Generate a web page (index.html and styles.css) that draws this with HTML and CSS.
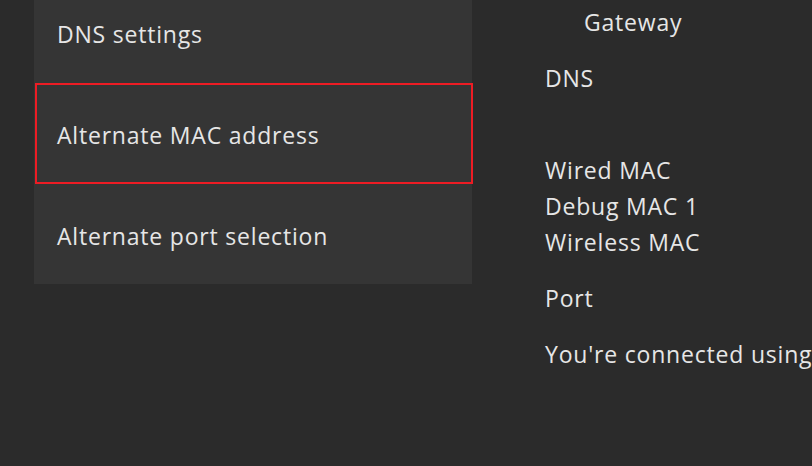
FILE: index.html
```html
<!DOCTYPE html>
<html lang="en">
<head>
  <meta charset="UTF-8" />
  <title>Advanced settings</title>
  <link rel="stylesheet" href="styles.css">
</head>
<body>
  <div class="page">
    <!-- settings menu -->
    <div class="menu">
      <div class="menu-item">DNS settings</div>
      <div class="menu-item focused">Alternate MAC address</div>
      <div class="menu-item">Alternate port selection</div>
    </div>

    <!-- network info -->
    <div class="info">
      <div class="group">
        <div class="line indent">Gateway</div>
      </div>
      <div class="group">
        <div class="line">DNS</div>
        <div class="line"></div>
      </div>
      <div class="group">
        <div class="line">Wired MAC</div>
        <div class="line">Debug MAC 1</div>
        <div class="line">Wireless MAC</div>
      </div>
      <div class="group">
        <div class="line">Port</div>
      </div>
      <div class="group">
        <div class="line">You're connected using</div>
      </div>
    </div>
  </div>
</body>
</html>
```

FILE: styles.css
```css
* {
  box-sizing: border-box;
}

body {
  margin: 0;
  background-color: #2b2b2b;
  color: #e6e6e6;
  font-family: 'Open Sans', sans-serif;
  font-size: 23px;
  letter-spacing: 0.8px;
  overflow: hidden;
}

.page {
  display: flex;
  height: 466px;
  padding-left: 34px;
}

.menu {
  width: 438px;
  height: 302px;
  margin-top: -18px;
  background-color: #353535;
  flex-shrink: 0;
}

.menu-item {
  height: 101px;
  display: flex;
  align-items: center;
  padding: 2px 21px 0;
  border: 2px solid transparent;
  white-space: nowrap;
}

.menu-item.focused {
  border-color: #ed1c24;
  margin: 0 -1px 0 1px;
  padding-left: 20px;
  padding-top: 3px;
}

.info {
  margin-left: 73px;
  padding-top: 4px;
  white-space: nowrap;
}

.group {
  margin-bottom: 20px;
}

.line {
  height: 36px;
  line-height: 36px;
}

.indent {
  padding-left: 39px;
}
```
